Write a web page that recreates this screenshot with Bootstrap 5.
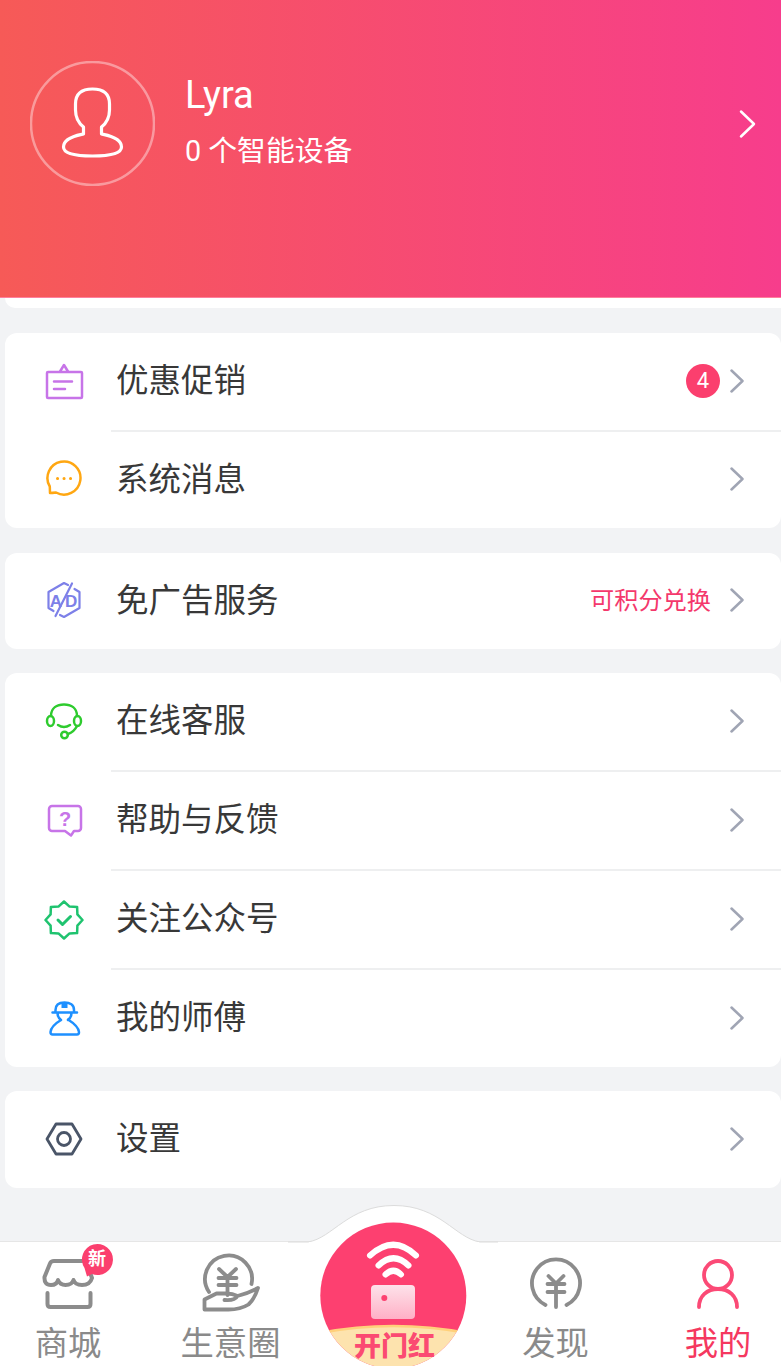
<!DOCTYPE html>
<html lang="zh">
<head>
<meta charset="utf-8">
<title>我的</title>
<link href="https://cdn.jsdelivr.net/npm/bootstrap@5.3.0/dist/css/bootstrap.min.css" rel="stylesheet">
<style>
html,body{height:1366px;overflow:hidden}
body{background:#f2f3f5;font-family:Roboto,"Noto Sans CJK SC",sans-serif;color:#383838}
.hero{height:298px;background:linear-gradient(90deg,#f65a57,#f73d8c);border-bottom:1px solid #ff7f9c;padding:61px 23px 0 30px}
.avatar{width:125px;height:125px;flex:none}
.hero-text{margin-left:30px;color:#fff}
.hero-name{font-size:38px;line-height:44px;margin-top:12px}
.hero-sub{font-size:28.800px;line-height:40px;margin-top:14px}
.hero-chev{width:20px;height:30px;margin-top:48px}
.strip{height:10px;margin-left:5px;background:#fff;border-bottom-left-radius:11px}
.stack{padding:25px 0 0 5px;gap:24px}
.panel{background:#fff;border-radius:12px;overflow:hidden}
.panel-first{margin-bottom:1px}
.line{height:97px}
.line-short{height:96px}
.line-icon{width:106px;padding-left:39px;flex:none;margin-bottom:2px}
.line-icon svg{width:40px;height:40px;display:block}
.line-main{height:100%;padding:0 37px 0 5px;font-size:32.500px;min-width:0}
.line:not(:last-child){height:99px}
.line:not(:last-child) .line-main{border-bottom:2px solid #eeeff0}
.chev{width:14px;height:24px;flex:none;margin-bottom:2px}
.count{width:34px;height:34px;border-radius:50%;background:#fb3f6e;color:#fff;font-size:22px;line-height:34px;text-align:center;margin-right:10px;margin-bottom:2px}
.hint{font-size:24.200px;color:#f4386c;margin-right:19px}
.tabbar{height:125px;background:#fff;border-top:1px solid #e6e6e6;padding:0 13px 0 18px;flex:none}
.tab{width:100px;color:#8a8a8a;font-size:33.300px;line-height:44px;text-align:center;white-space:nowrap}
.tab svg{display:block;width:100px;height:80px}
.tab-on{color:#f5385f}
.bump{left:0;top:-41px;width:230px;height:166px;margin-left:280px}
.bump text{font-family:"Noto Sans CJK SC",sans-serif;font-weight:900}
.ic{fill:none;stroke-linecap:round;stroke-linejoin:round}
.tab text{font-family:"Noto Sans CJK SC",sans-serif;font-weight:700}
.icon-text{font-family:"Liberation Sans",sans-serif;font-weight:700}
</style>
</head>
<body class="d-flex flex-column">
<header class="hero d-flex align-items-start">
  <svg class="avatar ic" viewBox="30 62 125 125"><circle cx="92.500" cy="124.500" r="61.500" stroke="#fff" stroke-opacity=".4" stroke-width="2.500"/><path d="M92.500 90c-11 0-17 5-17 15v6c0 8 3 13 8 17v7c-4 1-20 3-20 13 0 7 12 9 29 9s29-2 29-9c0-10-16-12-20-13v-7c5-4 8-9 8-17v-6c0-10-6-15-17-15z" stroke="#fff" stroke-width="3.200"/></svg>
  <div class="hero-text flex-grow-1">
    <div class="hero-name">Lyra</div>
    <div class="hero-sub">0 个智能设备</div>
  </div>
  <svg class="hero-chev ic" viewBox="0 0 20 30"><path d="M3 2.500 16 15 3 27.500" stroke="#fff" stroke-width="2.500"/></svg>
</header>
<div class="strip"></div>
<main class="stack d-flex flex-column">
  <section class="panel panel-first">
    <div class="line d-flex align-items-center">
      <div class="line-icon"><svg class="ic" viewBox="0 0 40 40" stroke="#c774e8" stroke-width="2.500"><path d="M4 10h33a1 1 0 0 1 1 1v24a1 1 0 0 1-1 1H4a1 1 0 0 1-1-1V11a1 1 0 0 1 1-1zM16 9.500l4-6.500 4 6.500M10 19.500h18M10 27h11"/></svg></div>
      <div class="line-main flex-grow-1 d-flex align-items-center"><span class="flex-grow-1">优惠促销</span><span class="count">4</span><svg class="chev ic" viewBox="0 0 14 24"><path d="M1.500 1.500 12.500 12 1.500 22.500" stroke="#a0a5b4" stroke-width="2.500"/></svg></div>
    </div>
    <div class="line line-short d-flex align-items-center">
      <div class="line-icon"><svg class="ic" viewBox="0 0 40 40" stroke="#ffa712" stroke-width="2.500"><path d="M6 34l-.2-6.500A16.500 16.500 0 1 1 12 33.500Q8 34 6 34z"/><path d="M13.500 19.500h.1M20 19.500h.1M26.500 19.500h.1" stroke-width="3"/></svg></div>
      <div class="line-main flex-grow-1 d-flex align-items-center"><span class="flex-grow-1">系统消息</span><svg class="chev ic" viewBox="0 0 14 24"><path d="M1.500 1.500 12.500 12 1.500 22.500" stroke="#a0a5b4" stroke-width="2.500"/></svg></div>
    </div>
  </section>
  <section class="panel">
    <div class="line line-short d-flex align-items-center">
      <div class="line-icon"><svg class="ic" viewBox="0 0 40 40" stroke="#7d80e8" stroke-width="2.200"><path d="M24 5l-4-2L4.500 12v16l5 3M16 35l4 2 15.500-9V12l-5-3M28 3.500 11.500 36"/><text class="icon-text" x="21" y="27" text-anchor="middle" font-size="17" letter-spacing="3" fill="#7d80e8" stroke="none">AD</text></svg></div>
      <div class="line-main flex-grow-1 d-flex align-items-center"><span class="flex-grow-1">免广告服务</span><span class="hint">可积分兑换</span><svg class="chev ic" viewBox="0 0 14 24"><path d="M1.500 1.500 12.500 12 1.500 22.500" stroke="#a0a5b4" stroke-width="2.500"/></svg></div>
    </div>
  </section>
  <section class="panel">
    <div class="line d-flex align-items-center">
      <div class="line-icon"><svg class="ic" viewBox="0 0 40 40" stroke="#2ecb2e" stroke-width="2.500"><path d="M7 14C7 6 13 2.500 20 2.500S33 6 33 14M14 23q6 4 12 0M33 24q-3 6-9 8"/><ellipse cx="6.500" cy="19" rx="3.500" ry="5"/><ellipse cx="33.500" cy="19" rx="3.500" ry="5"/><circle cx="20.500" cy="33" r="3.300"/></svg></div>
      <div class="line-main flex-grow-1 d-flex align-items-center"><span class="flex-grow-1">在线客服</span><svg class="chev ic" viewBox="0 0 14 24"><path d="M1.500 1.500 12.500 12 1.500 22.500" stroke="#a0a5b4" stroke-width="2.500"/></svg></div>
    </div>
    <div class="line d-flex align-items-center">
      <div class="line-icon"><svg class="ic" viewBox="0 0 40 40" stroke="#c774e8" stroke-width="2.500"><path d="M5 8a3 3 0 0 1 3-3h26a3 3 0 0 1 3 3v19a3 3 0 0 1-3 3h-4l-3 4.500-6-4.500H8a3 3 0 0 1-3-3z"/><text class="icon-text" x="21" y="25" text-anchor="middle" font-size="20" fill="#c774e8" stroke="none">?</text></svg></div>
      <div class="line-main flex-grow-1 d-flex align-items-center"><span class="flex-grow-1">帮助与反馈</span><svg class="chev ic" viewBox="0 0 14 24"><path d="M1.500 1.500 12.500 12 1.500 22.500" stroke="#a0a5b4" stroke-width="2.500"/></svg></div>
    </div>
    <div class="line d-flex align-items-center">
      <div class="line-icon"><svg class="ic" viewBox="0 0 40 40" stroke="#1fc36f" stroke-width="2.500"><path d="M20 1.500l5.550 5.100 7.550.3.300 7.550L38.500 20l-5.100 5.550-.3 7.550-7.550.3L20 38.500l-5.550-5.100-7.550-.3-.3-7.550L1.500 20l5.100-5.550.3-7.550 7.550-.3z"/><path d="M14 20l4.500 4.500 8-8" stroke-width="3"/></svg></div>
      <div class="line-main flex-grow-1 d-flex align-items-center"><span class="flex-grow-1">关注公众号</span><svg class="chev ic" viewBox="0 0 14 24"><path d="M1.500 1.500 12.500 12 1.500 22.500" stroke="#a0a5b4" stroke-width="2.500"/></svg></div>
    </div>
    <div class="line d-flex align-items-center">
      <div class="line-icon"><svg class="ic" viewBox="0 0 40 40" stroke="#1e90ff" stroke-width="2.500"><path d="M8.500 14.500H33M11.500 14.500V12C11.500 7 15 4.500 20.500 4.500S30 7 30 12v2.500M13.500 15c0 3 1 5 3.500 7M27.500 15c0 3-1 5-3.500 7M17 22C12 25 7 29 6.500 34c0 1.500 1 2.500 2 2.500H33c1 0 2-1 2-2.500-.5-5-5.500-9-11-12.500"/><rect x="17.500" y="4" width="6" height="6" fill="#1e90ff" stroke="none"/></svg></div>
      <div class="line-main flex-grow-1 d-flex align-items-center"><span class="flex-grow-1">我的师傅</span><svg class="chev ic" viewBox="0 0 14 24"><path d="M1.500 1.500 12.500 12 1.500 22.500" stroke="#a0a5b4" stroke-width="2.500"/></svg></div>
    </div>
  </section>
  <section class="panel">
    <div class="line d-flex align-items-center">
      <div class="line-icon"><svg class="ic" viewBox="0 0 40 40" stroke="#4a5568" stroke-width="2.800"><path d="M12 5h16l9 15-9 15H12L3 20z"/><circle cx="20" cy="20" r="6.500"/></svg></div>
      <div class="line-main flex-grow-1 d-flex align-items-center"><span class="flex-grow-1">设置</span><svg class="chev ic" viewBox="0 0 14 24"><path d="M1.500 1.500 12.500 12 1.500 22.500" stroke="#a0a5b4" stroke-width="2.500"/></svg></div>
    </div>
  </section>
</main>
<nav class="tabbar mt-auto d-flex justify-content-between position-relative">
  <svg class="bump position-absolute" viewBox="280 1200 230 166">
    <defs>
      <clipPath id="dot"><circle cx="393.300" cy="1294.500" r="73"/></clipPath>
      <linearGradient id="tabg" x1="0" y1="0" x2="0" y2="1"><stop offset="0" stop-color="#fde2ea"/><stop offset="1" stop-color="#ffb0c6"/></linearGradient>
    </defs>
    <path d="M288 1241H308C333 1237 348 1204.500 394 1204.500S455 1237 480 1241H498" fill="#fff" stroke="#dcdcdc" stroke-width="1"/>
    <rect x="309" y="1241" width="170" height="4" fill="#fff"/>
    <circle cx="393.300" cy="1294.500" r="73" fill="#fd4070"/>
    <g clip-path="url(#dot)">
      <path d="M310 1334Q393 1316 477 1334V1370H310z" fill="#fde3ae" stroke="#ffd07a" stroke-width="2.500"/>
    </g>
    <g class="ic" stroke="#fff" stroke-width="6">
      <path d="M370 1254.500Q393.500 1233 416 1254.500M378.500 1264.500Q393.500 1250 408.500 1264.500M385.500 1273.500Q393.500 1266 401 1273.500"/>
    </g>
    <rect x="371" y="1284" width="44" height="34" rx="4" fill="url(#tabg)"/>
    <circle cx="384.300" cy="1297" r="3" fill="#fd4070"/>
    <text x="394.500" y="1355" text-anchor="middle" font-size="27" fill="#fb4a72">开门红</text>
  </svg>
  <div class="tab">
    <svg class="ic" viewBox="18 1242 100 80" stroke="#8c8c8c" stroke-width="4">
      <path d="M84 1261H54Q51 1261 50 1263.500L44.500 1277Q44 1285 51 1285 57 1285 58 1280 60 1285 65.500 1285 72 1285 73.500 1280 75 1285 82 1285 90 1285 92 1278L89 1270M47.500 1293v11q0 3 3 3h37q3 0 3-3v-11"/>
      <path d="M84.500 1268A15.500 15.500 0 1 1 92 1274L87 1276.500z" fill="#fb3f6e" stroke="none"/>
      <text x="97" y="1265" text-anchor="middle" font-size="18" fill="#fff" stroke="none">新</text>
    </svg>
    商城
  </div>
  <div class="tab">
    <svg class="ic" viewBox="180.500 1242 100 80" stroke="#8c8c8c" stroke-width="3.800">
      <path d="M208.500 1292A23.500 23.500 0 1 1 251 1284M218.500 1269l8.500 8 8.500-8M218 1278h18M218 1285h18M227 1278v17"/>
      <path d="M204 1299.500V1309.500H228Q240 1309.500 248 1304.500 254 1299 257.500 1288 248 1293 237 1296 232 1293.500 226 1293.500H216zM237 1296Q234 1301 224 1300"/>
    </svg>
    生意圈
  </div>
  <div class="tab"></div>
  <div class="tab">
    <svg class="ic" viewBox="505.500 1242 100 80" stroke="#8c8c8c" stroke-width="3.800">
      <path d="M545 1305A24 24 0 1 1 566 1305M548 1276l7.500 7.500L563 1276M547 1284h17M547 1292h17M555.500 1284v23"/>
    </svg>
    发现
  </div>
  <div class="tab tab-on">
    <svg class="ic" viewBox="668 1242 100 80" stroke="#fb4a76" stroke-width="3.800">
      <circle cx="718" cy="1275" r="14"/>
      <path d="M699 1307C699 1296 707 1289 718 1289S737 1296 737 1307"/>
    </svg>
    我的
  </div>
</nav>
</body>
</html>
